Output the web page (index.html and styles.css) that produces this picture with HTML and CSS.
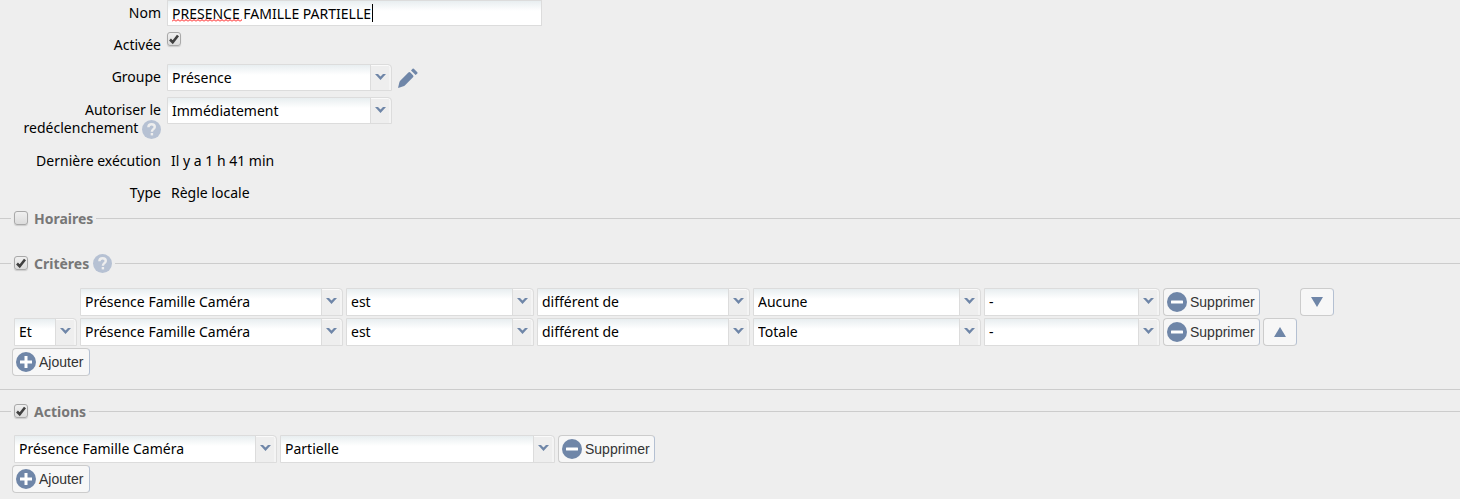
FILE: index.html
```html
<!DOCTYPE html>
<html lang="fr">
<head>
    <meta charset="UTF-8">
    <meta name="viewport" content="width=device-width, initial-scale=1.0">
    <title>Règle</title>
    <link rel="stylesheet" href="styles.css">
</head>
<body>
    <svg class="defs" width="0" height="0" aria-hidden="true">
        <symbol id="icon-help" viewBox="0 0 19 19">
            <circle cx="9.5" cy="9.5" r="9.5" fill="#b6c1d3"/>
            <path d="M6.4 7.2C6.4 5.2 7.7 4.2 9.6 4.2s3.2 1 3.2 2.7c0 2.2-2.9 2.4-2.9 4.8" fill="none" stroke="#eee" stroke-width="2.4"/>
            <rect x="8.7" y="13" width="2.4" height="2.4" fill="#eee"/>
        </symbol>
        <symbol id="icon-minus" viewBox="0 0 20 20">
            <circle cx="10" cy="10" r="10" fill="#6f86a8"/>
            <rect x="4" y="8.5" width="12" height="3" rx="0.5" fill="#fff"/>
        </symbol>
        <symbol id="icon-plus" viewBox="0 0 20 20">
            <circle cx="10" cy="10" r="10" fill="#6f86a8"/>
            <path d="M10 4v12M4 10h12" stroke="#fff" stroke-width="3"/>
        </symbol>
    </svg>

    <div class="form">
        <div class="form-row">
            <label for="nom">Nom</label>
            <div class="text-field">
                <input type="text" id="nom" value="PRESENCE FAMILLE PARTIELLE">
                <span class="spelling"></span>
                <span class="caret"></span>
            </div>
        </div>
        <div class="form-row">
            <label for="activee">Activée</label>
            <input type="checkbox" id="activee" checked>
        </div>
        <div class="form-row">
            <label for="groupe">Groupe</label>
            <select id="groupe"><option>Présence</option></select>
            <button class="edit" type="button" aria-label="Modifier">
                <svg width="20" height="20" viewBox="0 0 20 20" fill="#6f86a8">
                    <path d="M0 20L1.400 14.200Q1.600 13.400 2.200 12.800L10.400 4.600Q11.400 3.600 12.400 4.600L15 7.200Q16 8.200 15 9.200L6.800 17.400Q6.200 18 5.400 18.300Z"/>
                    <path d="M13 2.400L14.600 0.700Q15.200 0.200 15.800 0.700L19.300 4.200Q19.800 4.800 19.300 5.400L17.600 7Z"/>
                </svg>
            </button>
        </div>
        <div class="form-row tall">
            <label for="redeclenchement">Autoriser le redéclenchement <svg class="help" role="img" aria-label="Aide"><use href="#icon-help"/></svg></label>
            <select id="redeclenchement"><option>Immédiatement</option></select>
        </div>
        <div class="form-row">
            <span class="label">Dernière exécution</span>
            <span class="value">Il y a 1 h 41 min</span>
        </div>
        <div class="form-row">
            <span class="label">Type</span>
            <span class="value">Règle locale</span>
        </div>
    </div>

    <fieldset class="collapsed">
        <legend><input type="checkbox" id="horaires"><label for="horaires">Horaires</label></legend>
    </fieldset>

    <fieldset class="criteria">
        <legend><input type="checkbox" id="criteres" checked><label for="criteres">Critères</label><svg class="help" role="img" aria-label="Aide"><use href="#icon-help"/></svg></legend>
        <div class="criteria-row">
            <span></span>
            <select aria-label="Objet"><option>Présence Famille Caméra</option></select>
            <select aria-label="Verbe"><option>est</option></select>
            <select aria-label="Comparaison"><option>différent de</option></select>
            <select aria-label="Valeur"><option>Aucune</option></select>
            <select aria-label="Durée"><option>-</option></select>
            <button class="btn" type="button"><svg class="icon"><use href="#icon-minus"/></svg>Supprimer</button>
            <span></span>
            <button class="btn move" type="button" aria-label="Descendre"><svg width="12" height="10" viewBox="0 0 12 10"><path d="M0 0h12L6 10z" fill="#6f86a8"/></svg></button>
        </div>
        <div class="criteria-row">
            <select aria-label="Opérateur"><option>Et</option></select>
            <select aria-label="Objet"><option>Présence Famille Caméra</option></select>
            <select aria-label="Verbe"><option>est</option></select>
            <select aria-label="Comparaison"><option>différent de</option></select>
            <select aria-label="Valeur"><option>Totale</option></select>
            <select aria-label="Durée"><option>-</option></select>
            <button class="btn" type="button"><svg class="icon"><use href="#icon-minus"/></svg>Supprimer</button>
            <button class="btn move" type="button" aria-label="Monter"><svg width="12" height="10" viewBox="0 0 12 10"><path d="M0 10h12L6 0z" fill="#6f86a8"/></svg></button>
        </div>
        <button class="btn add" type="button"><svg class="icon"><use href="#icon-plus"/></svg>Ajouter</button>
    </fieldset>

    <fieldset class="actions">
        <legend><input type="checkbox" id="actions" checked><label for="actions">Actions</label></legend>
        <div class="actions-row">
            <select aria-label="Objet"><option>Présence Famille Caméra</option></select>
            <select aria-label="Valeur"><option>Partielle</option></select>
            <button class="btn" type="button"><svg class="icon"><use href="#icon-minus"/></svg>Supprimer</button>
        </div>
        <button class="btn add" type="button"><svg class="icon"><use href="#icon-plus"/></svg>Ajouter</button>
    </fieldset>
</body>
</html>
```
FILE: styles.css
```css
* {
    box-sizing: border-box;
}
body {
    margin: 0;
    background-color: #eee;
    color: #000;
    font-family: Tahoma, "Noto Sans", sans-serif;
    font-size: 14px;
    line-height: 18px;
}
.defs {
    display: block;
}
input, select, button {
    margin: 0;
    font: inherit;
    color: inherit;
}

/* Champs */
.form-row {
    display: flex;
    align-items: flex-start;
    gap: 6px;
    min-height: 26px;
    margin-bottom: 6px;
}
.form-row.tall {
    min-height: 45px;
}
.form-row:last-child {
    margin-bottom: 2px;
}
.form-row > label, .form-row > .label {
    width: 161px;
    padding-top: 4px;
    padding-left: 16px;
    text-align: right;
}
.form-row > .value {
    padding: 4px;
}
.form-row > select {
    width: 225px;
    height: 27px;
}
.text-field {
    position: relative;
    width: 375px;
}
.text-field input {
    display: block;
    width: 100%;
    height: 26px;
    padding: 0 4px;
    border: 1px solid #dcdcdc;
    background: linear-gradient(#e8eef0, #fff 10px);
    outline: none;
}
.spelling {
    position: absolute;
    left: 5px;
    top: 19px;
    width: 70px;
    height: 3px;
    background: url("data:image/svg+xml,%3Csvg xmlns='http://www.w3.org/2000/svg' width='4' height='3'%3E%3Cpath d='M0 2.500L2 .5L4 2.500' fill='none' stroke='red'/%3E%3C/svg%3E");
}
.caret {
    position: absolute;
    left: 205px;
    top: 4px;
    width: 1px;
    height: 18px;
    background-color: #000;
}
select {
    appearance: none;
    height: 28px;
    min-width: 0;
    padding: 0 24px 0 4px;
    border: 1px solid #dcdcdc;
    border-radius: 0 4px 0 0;
    background:
        url("data:image/svg+xml,%3Csvg xmlns='http://www.w3.org/2000/svg' width='21' height='26'%3E%3Cpath fill='%23eee' d='M0 0h21v26H0z'/%3E%3Cpath d='M.5 0v26' stroke='%23dcdcdc'/%3E%3Cpath d='M1 .5h17q2 0 2 2V26' fill='none' stroke='%23fafafa'/%3E%3Cpath fill='%236f86a8' d='M5 9h3l2.500 2.500L13 9h3l-5.500 6z'/%3E%3C/svg%3E") right top no-repeat,
        linear-gradient(#e8eef0, #fff 10px);
}
input[type="checkbox"] {
    appearance: none;
    width: 14px;
    height: 14px;
    border: 1px solid #a9a9a9;
    border-radius: 3px;
    background: linear-gradient(#f0f0f0, #dcdcdc);
    box-shadow: 0 1px 1px #ccc;
}
input[type="checkbox"]:checked {
    background:
        url("data:image/svg+xml,%3Csvg xmlns='http://www.w3.org/2000/svg' width='12' height='12'%3E%3Cpath d='M2 6.500L4.700 9.200L10 2.500' fill='none' stroke='%23404040' stroke-width='2.600'/%3E%3C/svg%3E") center no-repeat,
        linear-gradient(#f0f0f0, #dcdcdc);
}
.help {
    width: 19px;
    height: 19px;
    vertical-align: middle;
}
.edit {
    padding: 4px 0 0;
    border: none;
    background: none;
    cursor: pointer;
}
.edit svg {
    display: block;
}

/* Sections */
fieldset {
    min-width: 0;
    margin: 0;
    padding: 0 0 0 14px;
    border: 0 solid #ccc;
    border-top-width: 1px;
}
legend {
    display: flex;
    align-items: center;
    height: 20px;
    margin-left: -3px;
    padding: 0 3px;
    color: #777;
    font-weight: bold;
}
legend label {
    margin: 2px 0 0 6px;
}
legend .help {
    margin-left: 4px;
}
fieldset.collapsed {
    margin-bottom: 25px;
}
fieldset.criteria {
    padding-bottom: 13px;
    border-bottom-width: 1px;
    margin-bottom: 11px;
}
.criteria-row, .actions-row {
    display: grid;
    gap: 3px;
    margin-bottom: 2px;
}
.criteria-row {
    grid-template-columns: 63px 263px 188px 213px 228px 176px 97px 34px 34px;
}
.actions-row {
    grid-template-columns: 263px 275px 97px;
}
.criteria legend {
    margin-bottom: 15px;
}
.actions legend {
    margin-bottom: 14px;
}
.btn {
    display: flex;
    align-items: center;
    gap: 3px;
    height: 28px;
    padding: 0 3px;
    border: 1px solid #ccc;
    border-right-color: #b4c0d2;
    border-radius: 4px;
    background-color: #f7f7f7;
    color: #333;
    font-family: "Liberation Sans", Arial, sans-serif;
    white-space: nowrap;
    cursor: pointer;
}
.btn .icon {
    flex: none;
    width: 20px;
    height: 20px;
}
.btn.move {
    justify-content: center;
}
.btn.add {
    margin-left: -2px;
    padding-right: 6px;
}
```
